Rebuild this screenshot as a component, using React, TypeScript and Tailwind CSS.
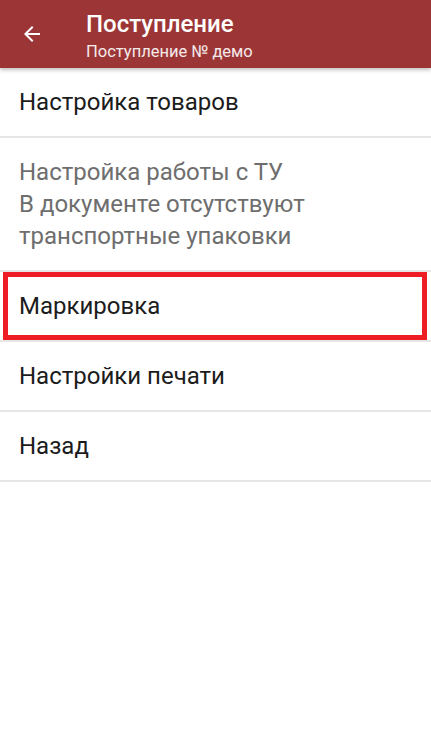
import React from 'react';

type MenuItem = {
  id: string;
  lines: string[];
  disabled?: boolean;
  highlighted?: boolean;
};

const ITEMS: MenuItem[] = [
  { id: 'goods', lines: ['Настройка товаров'] },
  {
    id: 'tu',
    lines: ['Настройка работы с ТУ', 'В документе отсутствуют', 'транспортные упаковки'],
    disabled: true,
  },
  { id: 'marking', lines: ['Маркировка'], highlighted: true },
  { id: 'print', lines: ['Настройки печати'] },
  { id: 'back', lines: ['Назад'] },
];

const ArrowBack = () => (
  <svg width="24" height="24" viewBox="0 0 24 24" fill="none">
    <path d="M20 11H7.83l5.59-5.59L12 4l-8 8 8 8 1.41-1.41L7.83 13H20v-2z" fill="#fff" />
  </svg>
);

export default function App() {
  return (
    <div className="w-[431px] h-[740px] bg-white font-['Roboto',sans-serif] overflow-hidden">
      <header className="relative z-10 h-[68px] bg-[#9b3536] flex items-center shadow-[0_2px_4px_rgba(0,0,0,0.25)]">
        <button className="ml-[20px] w-[24px] h-[24px] flex items-center justify-center">
          <ArrowBack />
        </button>
        <div className="ml-[42px] self-start pt-[10px] flex flex-col">
          <span className="text-[24px] leading-[28px] font-medium text-white">Поступление</span>
          <span className="mt-[3px] text-[16.5px] leading-[21px] text-white/90">Поступление № демо</span>
        </div>
      </header>

      <ul>
        {ITEMS.map((item) => (
          <li key={item.id} className="relative border-b-2 border-[#e6e6e6]">
            <div
              className={`px-[19px] py-[18px] text-[24px] leading-[32px] ${
                item.disabled ? 'text-[#6e6e6e] py-[17px]' : 'text-[#1c1c1c]'
              }`}
            >
              {item.lines.map((line) => (
                <div key={line}>{line}</div>
              ))}
            </div>
            {item.highlighted && (
              <div className="absolute left-[3px] right-[4px] top-0 bottom-0 border-[5px] border-[#ee1c25]" />
            )}
          </li>
        ))}
      </ul>
    </div>
  );
}
